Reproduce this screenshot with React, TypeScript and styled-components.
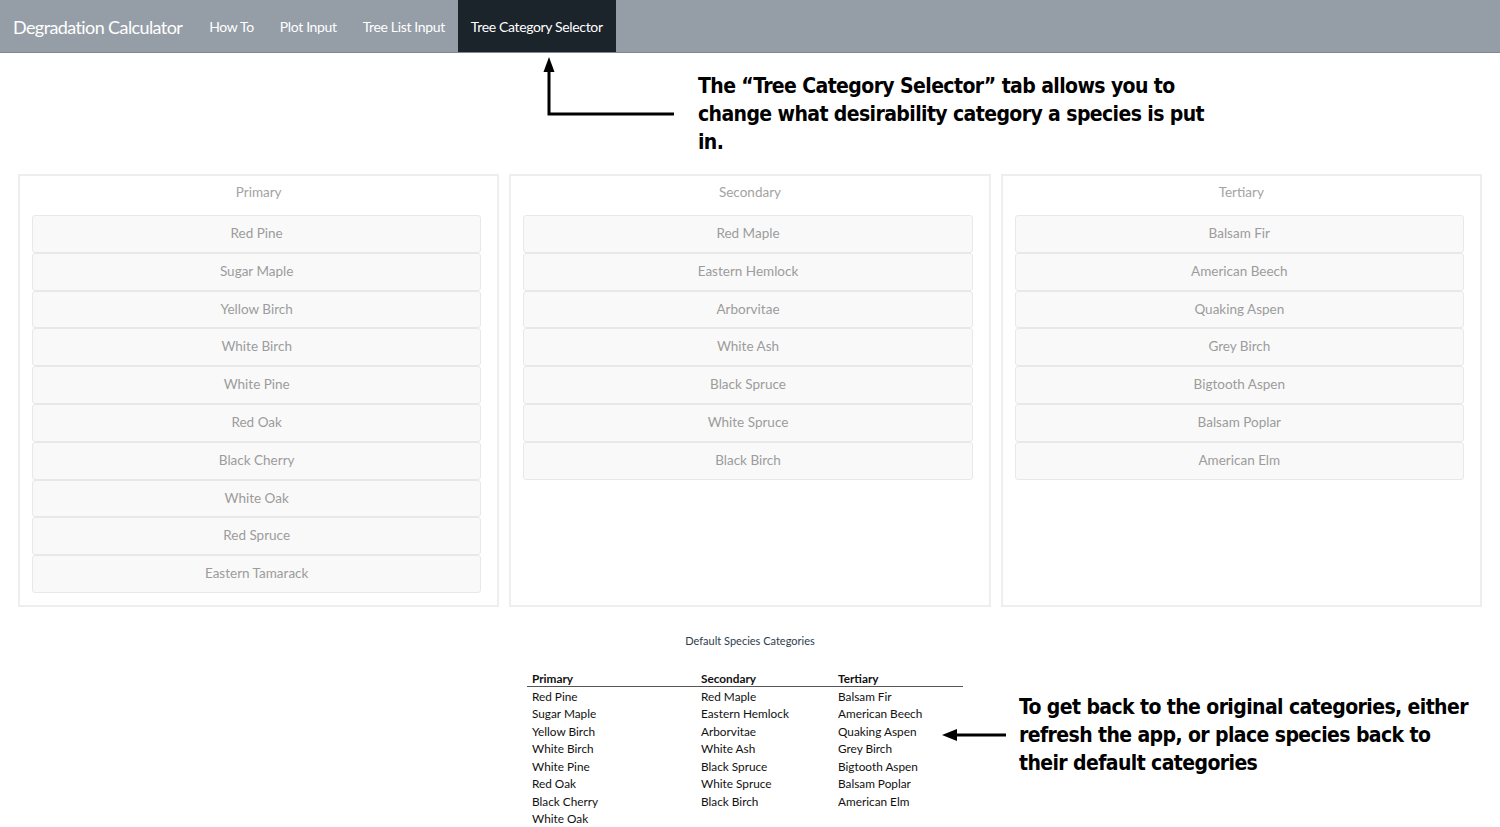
import React from "react";
import styled, { createGlobalStyle } from "styled-components";

const GlobalStyle = createGlobalStyle`
  body {
    margin: 0;
    background: #ffffff;
    font-family: Lato, "Open Sans", sans-serif;
  }
`;

const navItems = ["How To", "Plot Input", "Tree List Input", "Tree Category Selector"];

const categories = [
  {
    title: "Primary",
    species: [
      "Red Pine",
      "Sugar Maple",
      "Yellow Birch",
      "White Birch",
      "White Pine",
      "Red Oak",
      "Black Cherry",
      "White Oak",
      "Red Spruce",
      "Eastern Tamarack",
    ],
  },
  {
    title: "Secondary",
    species: [
      "Red Maple",
      "Eastern Hemlock",
      "Arborvitae",
      "White Ash",
      "Black Spruce",
      "White Spruce",
      "Black Birch",
    ],
  },
  {
    title: "Tertiary",
    species: [
      "Balsam Fir",
      "American Beech",
      "Quaking Aspen",
      "Grey Birch",
      "Bigtooth Aspen",
      "Balsam Poplar",
      "American Elm",
    ],
  },
];

// default table has the same lists, minus the two extra primary species
const defaults = [
  categories[0].species.slice(0, 8),
  categories[1].species,
  categories[2].species,
];

const colWidths = [169, 137, 130];

const App: React.FC = () => {
  const rows = Math.max(...defaults.map((d) => d.length));

  return (
    <>
      <GlobalStyle />
      <NavBar>
        <Brand>Degradation Calculator</Brand>
        {navItems.map((item) => (
          <NavItem key={item} active={item === "Tree Category Selector"}>
            {item}
          </NavItem>
        ))}
      </NavBar>

      <Callout>
        <UpArrow width="140" height="60" viewBox="0 0 140 60">
          <polygon points="9,0 3.5,15 14.5,15" fill="#000" />
          <path d="M9 14 V57 H134" stroke="#000" strokeWidth="3" fill="none" />
        </UpArrow>
        <Note>
          The “Tree Category Selector” tab allows you to
          <br />
          change what desirability category a species is put
          <br />
          in.
        </Note>
      </Callout>

      <PanelRow>
        {categories.map((cat) => (
          <Panel key={cat.title}>
            <PanelTitle>{cat.title}</PanelTitle>
            <ItemList>
              {cat.species.map((s) => (
                <SpeciesItem key={s}>{s}</SpeciesItem>
              ))}
            </ItemList>
          </Panel>
        ))}
      </PanelRow>

      <Caption>Default Species Categories</Caption>

      <BottomRow>
        <DefaultTable>
          <colgroup>
            {colWidths.map((w, i) => (
              <col key={i} style={{ width: w }} />
            ))}
          </colgroup>
          <thead>
            <tr>
              {categories.map((cat) => (
                <HeadCell key={cat.title}>{cat.title}</HeadCell>
              ))}
            </tr>
          </thead>
          <tbody>
            {Array.from({ length: rows }).map((_, r) => (
              <tr key={r}>
                {defaults.map((list, c) => (
                  <Cell key={c} first={r === 0}>
                    {list[r] ?? ""}
                  </Cell>
                ))}
              </tr>
            ))}
          </tbody>
        </DefaultTable>

        <BottomNote>
          <svg width="64" height="14" viewBox="0 0 64 14">
            <polygon points="0,7 15,1 15,13" fill="#000" />
            <path d="M14 7 H64" stroke="#000" strokeWidth="3" />
          </svg>
          <Note>
            To get back to the original categories, either
            <br />
            refresh the app, or place species back to
            <br />
            their default categories
          </Note>
        </BottomNote>
      </BottomRow>
    </>
  );
};

export default App;

const NavBar = styled.nav`
  display: flex;
  align-items: stretch;
  height: 52px;
  background-color: #959ea7;
  border-bottom: 1px solid #7f8891;
`;

const Brand = styled.div`
  display: flex;
  align-items: center;
  padding: 1px 14px 0 13px;
  color: #ffffff;
  font-size: 18px;
  letter-spacing: -0.6px;
`;

const NavItem = styled.div<{ active?: boolean }>`
  display: flex;
  align-items: center;
  padding: 1px 13px 0;
  color: #ffffff;
  font-size: 14px;
  letter-spacing: -0.35px;
  background-color: ${(p) => (p.active ? "#1b232b" : "transparent")};
`;

const Callout = styled.div`
  display: flex;
  align-items: flex-start;
  gap: 18px;
  height: 121px;
  padding-left: 540px;
  box-sizing: border-box;
`;

const UpArrow = styled.svg`
  margin-top: 4px;
  flex-shrink: 0;
`;

const Note = styled.div`
  margin-top: 19px;
  font-family: "DejaVu Sans Condensed", "Liberation Sans", sans-serif;
  font-weight: 700;
  font-size: 21px;
  letter-spacing: -0.6px;
  line-height: 28px;
  color: #000000;
  white-space: nowrap;
`;

const PanelRow = styled.div`
  display: flex;
  gap: 10px;
  padding: 0 18px;
`;

const Panel = styled.div`
  flex: 1;
  border: 2px solid #eeeeee;
  padding-bottom: 12px;
`;

const PanelTitle = styled.div`
  text-align: center;
  padding-top: 6px;
  line-height: 20px;
  margin-bottom: 13px;
  color: #a3a3a3;
  font-size: 13.5px;
`;

const ItemList = styled.div`
  padding: 0 16px 0 12px;
`;

const SpeciesItem = styled.div`
  text-align: center;
  background-color: #f9f9f9;
  border: 1px solid #e8e8e8;
  border-radius: 3px;
  padding: 8px 0;
  line-height: 19.8px;
  color: #9c9c9c;
  font-size: 13.5px;
`;

const Caption = styled.div`
  margin-top: 26px;
  text-align: center;
  line-height: 16px;
  font-size: 11px;
  color: #2e3d4d;
`;

const BottomRow = styled.div`
  display: flex;
  align-items: flex-start;
  margin-top: 22px;
  padding-left: 527px;
`;

const DefaultTable = styled.table`
  width: 436px;
  table-layout: fixed;
  border-collapse: collapse;
  font-family: Lato, "Open Sans", sans-serif;
  font-size: 11.8px;
  color: #111111;
  flex-shrink: 0;
`;

const HeadCell = styled.th`
  text-align: left;
  padding: 0 0 0 5px;
  line-height: 15px;
  font-weight: 700;
  border-bottom: 1.5px solid #555555;
`;

const Cell = styled.td<{ first?: boolean }>`
  padding: ${(p) => (p.first ? "1px" : "0")} 0 0 5px;
  line-height: 17.5px;
  white-space: nowrap;
`;

const BottomNote = styled.div`
  display: flex;
  align-items: center;
  gap: 13px;
  margin-left: -21px;
  margin-top: 22px;

  & > ${Note} {
    margin-top: 0;
  }
`;
